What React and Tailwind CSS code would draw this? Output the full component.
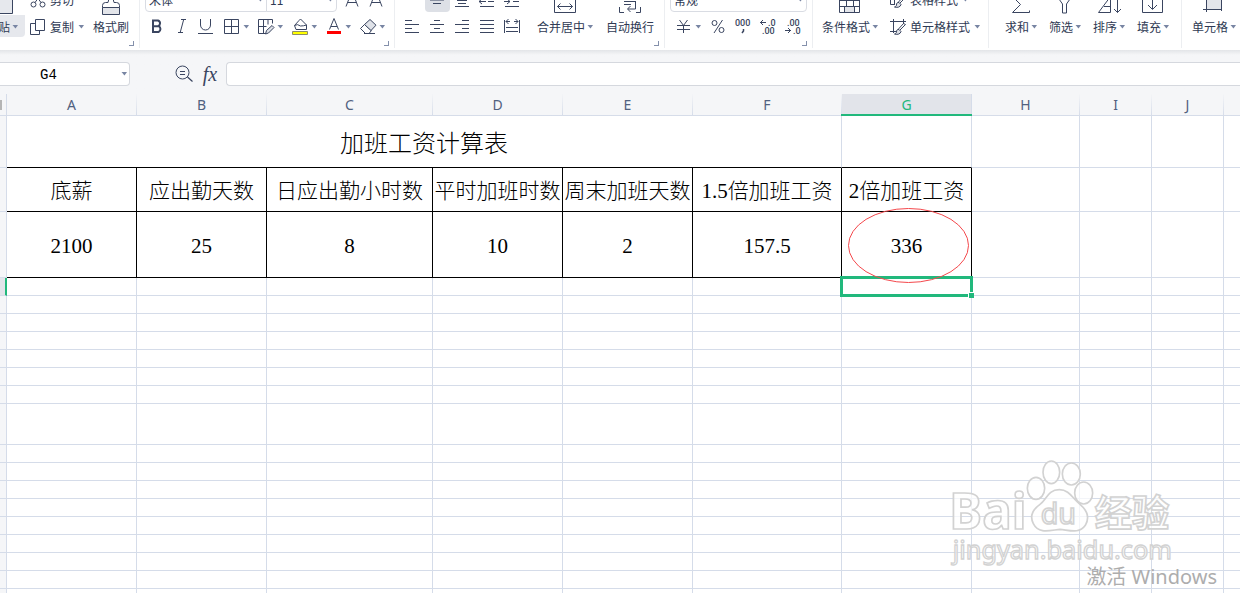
import { useState } from "react";

const COLUMNS = [
    { name: "A", width: "w-[130px]" },
    { name: "B", width: "w-[130px]" },
    { name: "C", width: "w-[166px]" },
    { name: "D", width: "w-[130px]" },
    { name: "E", width: "w-[130px]" },
    { name: "F", width: "w-[149px]" },
    { name: "G", width: "w-[130px]" },
    { name: "H", width: "w-[108px]" },
    { name: "I", width: "w-[72px]" },
    { name: "J", width: "w-[72px]" },
    { name: "", width: "" },
];

const HEADINGS = ["底薪", "应出勤天数", "日应出勤小时数", "平时加班时数", "周末加班天数", "1.5倍加班工资", "2倍加班工资"];
const VALUES = ["2100", "25", "8", "10", "2", "157.5", "336"];

// rows under the selected one, the seventh is taller
const EMPTY_ROWS = [18, 18, 18, 18, 18, 18, 41, 18, 18, 18, 18, 18, 18, 18, 18, 18];

function Arrow() {
    return (
        <svg width="6" height="4" viewBox="0 0 6 4" className="shrink-0">
            <path d="M.5 0h5.500L3.500 3.500z" fill="#7885a3" />
        </svg>
    );
}

function Icon({ size = 16, children }) {
    return (
        <svg
            width={size}
            height={size}
            viewBox={`0 0 ${size} ${size}`}
            fill="none"
            stroke="#3a4560"
            className="shrink-0 overflow-visible"
        >
            {children}
        </svg>
    );
}

function Group({ className = "", launcher, children }) {
    return (
        <div className={`relative flex h-[48px] shrink-0 items-end border-[#eceef1] pb-[11px] ${className}`}>
            {children}
            {launcher && (
                <button aria-label="更多设置" className="absolute right-[5px] bottom-[2px] size-[5px] border-r border-b border-[#8490ab]" />
            )}
        </div>
    );
}

function Rows({ children }) {
    return <div className="flex flex-col gap-[5px]">{children}</div>;
}

function Big({ label, arrow, className = "", children }) {
    return (
        <button className={`flex shrink-0 flex-col items-center gap-[3px] pb-px ${className}`}>
            <Icon size={24}>{children}</Icon>
            <span className="flex h-[18px] items-center gap-0.5 whitespace-nowrap">
                {label}
                {arrow && <Arrow />}
            </span>
        </button>
    );
}

function Small({ label, arrow, top, children }) {
    return (
        <button className={`flex items-center gap-1 whitespace-nowrap ${top ? "h-6" : "h-5"}`}>
            <Icon>{children}</Icon>
            {label}
            {arrow && <Arrow />}
        </button>
    );
}

function Tool({ label, children }) {
    return (
        <button aria-label={label} className="flex h-5 w-[34px] items-center gap-[3px] pl-0.5">
            <Icon>{children}</Icon>
            <Arrow />
        </button>
    );
}

function AlignTool({ label, active, top, children }) {
    return (
        <button
            aria-label={label}
            className={`flex w-[25px] items-center rounded-sm pl-1 ${top ? "h-6" : "h-5"} ${active ? "bg-[#dde0e6]" : ""}`}
        >
            <Icon>{children}</Icon>
        </button>
    );
}

function NumberTool({ label, children }) {
    return (
        <button aria-label={label} className="flex h-5 w-[25px] items-center pl-[5px]">
            <Icon>{children}</Icon>
        </button>
    );
}

function Digits({ x, y, children }) {
    return (
        <text x={x} y={y} className="fill-[#3a4560] stroke-none font-['Roboto'] text-[9px] font-medium">
            {children}
        </text>
    );
}

function Picker({ label, value, className }) {
    return (
        <label className={`relative flex h-6 items-center border border-[#d9dce3] bg-white ${className}`}>
            <select aria-label={label} className="h-full w-full appearance-none bg-transparent pl-[3px] outline-none">
                <option>{value}</option>
            </select>
            <span className="pointer-events-none absolute right-[3px]">
                <Arrow />
            </span>
        </label>
    );
}

function Brush() {
    return (
        <>
            <path d="M15.500 5.500L9.500 11.500M15.500 5.500l-2-1-5 5.500" />
            <path d="M9 10.500c-2-.5-2.500 1-2.500 2.500 0 1-1 2-2 2 3 1 6 0 6.500-2.500z" fill="#dfe2e8" />
        </>
    );
}

function Ribbon() {
    return (
        <div className="flex h-[50px] shrink-0 items-end overflow-hidden bg-white pb-0.5 text-xs text-[#2f3a54]">
            <Group className="w-[140px] border-r" launcher>
                <div className="flex w-[25px] shrink-0 justify-end overflow-hidden rounded-r-sm bg-linear-to-t from-[#e6e8ed] from-[22px] to-white to-[22px] pr-[7px]">
                    <Big label="粘贴" arrow>
                        <path d="M1.500 3.500h17v5M9.500 8.500h13v14h-13z" fill="#e6e8ed" />
                    </Big>
                </div>
                <div className="ml-[5px]">
                    <Rows>
                        <Small label="剪切" top>
                            <circle cx="3.500" cy="12.500" r="2.500" />
                            <circle cx="12.500" cy="12.500" r="2.500" />
                            <path d="M5 10.500L12 1M11 10.500L4 1" />
                        </Small>
                        <Small label="复制" arrow>
                            <path d="M5.500 .5h9v11h-9zM5.500 4.500h-5v11h9v-4" />
                        </Small>
                    </Rows>
                </div>
                <Big label="格式刷" className="ml-[9px]">
                    <path d="M3.500 16.500h17v7h-17z" fill="#e3e5ea" />
                    <path d="M3.500 16.500v-2q0-3 3-3h2.500l1-4h4l1 4h2.500q3 0 3 3v2" />
                </Big>
            </Group>

            <Group className="w-[255px] border-r pl-[5px]" launcher>
                <Rows>
                    <div className="flex">
                        <Picker label="字体" value="宋体" className="w-[122px] rounded-l-sm" />
                        <Picker label="字号" value="11" className="-ml-px w-[71px] rounded-r-sm" />
                        <button aria-label="增大字号" className="ml-[3px] flex h-6 w-6 items-center justify-center">
                            <Icon>
                                <path d="M2 14.500L8 -1l6 15.500M4 10.500h8" />
                            </Icon>
                        </button>
                        <button aria-label="减小字号" className="flex h-6 w-6 items-center justify-center">
                            <Icon>
                                <path d="M2 14.500L8 -1l6 15.500M4 10.500h8" />
                            </Icon>
                        </button>
                    </div>
                    <div className="flex">
                        <button aria-label="加粗" className="flex h-5 w-6 items-center justify-center">
                            <Icon>
                                <path d="M4 1.500h5a3 3 0 0 1 0 5.700H4zM4 7.200h5.600a3.200 3.200 0 0 1 0 5.800H4z" strokeWidth="2" />
                            </Icon>
                        </button>
                        <button aria-label="倾斜" className="flex h-5 w-6 items-center justify-center">
                            <Icon>
                                <path d="M8 .5h5M5 13.500h5M10.700 .5l-3.500 13" />
                            </Icon>
                        </button>
                        <button aria-label="下划线" className="mr-[5px] flex h-5 w-6 items-center justify-center">
                            <Icon>
                                <path d="M3.500 0v6a5 5 0 0 0 10 0V0M1 14.500h15" />
                            </Icon>
                        </button>
                        <Tool label="边框">
                            <path d="M.5 .5h14v14H.5zM7.500 .5v14M.5 7.500h14" />
                        </Tool>
                        <Tool label="绘制边框">
                            <path d="M8 14.500H.5V.5h14v4M5.500 .5v14M.5 7.500h8M10 .5v5" />
                            <path d="M7.500 15l1-3.500 5.500-5 2 2-5.500 5.500z" fill="#dfe2e8" />
                        </Tool>
                        <Tool label="填充颜色">
                            <path d="M2.500 6.500L7 1.500l1.500-1.500L14.500 6v4.500H4zM2.500 6.500q3-2 6 .5 3 0 6-1" />
                            <path d="M.5 12.500h15v3h-15z" fill="#ffff00" stroke="#8c8c6a" />
                        </Tool>
                        <Tool label="字体颜色">
                            <path d="M3.500 10.500L8 -.5l4.500 11M5 7.500h6" />
                            <path d="M1 13.500h14" stroke="#ff0000" strokeWidth="3" />
                        </Tool>
                        <Tool label="清除">
                            <path d="M4.500 5.500L.5 9.500l5 5h3.500l2.500-3z" />
                            <path d="M4.500 5.500L10 .5l6 5.700-5 5.300z" fill="#dfe2e8" />
                            <path d="M4 14.500h11" />
                        </Tool>
                    </div>
                </Rows>
            </Group>

            <Group className="w-[270px] border-r pl-[5px]" launcher>
                <Rows>
                    <div className="flex">
                        <AlignTool label="顶端对齐" top>
                            <path d="M1 .5h14M4 3.500h8" />
                        </AlignTool>
                        <AlignTool label="垂直居中" top active>
                            <path d="M4 4.500h8M1 8h14M4 11.500h8" />
                        </AlignTool>
                        <AlignTool label="底端对齐" top>
                            <path d="M3 8.500h10M4 11.500h8M1 14.500h14" />
                        </AlignTool>
                        <AlignTool label="减少缩进" top>
                            <path d="M9 5.500h6M1 14.500h14M0 9.500h7M3 7l-3 2.500L3 12M9 9.500h6" />
                        </AlignTool>
                        <AlignTool label="增加缩进" top>
                            <path d="M9 5.500h6M1 14.500h14M0 9.500h6M3 7l3 2.500L3 12M9 9.500h6" />
                        </AlignTool>
                    </div>
                    <div className="flex">
                        <AlignTool label="左对齐">
                            <path d="M1 1.500h7M1 5.500h14M1 9.500h7M1 13.500h14" />
                        </AlignTool>
                        <AlignTool label="居中">
                            <path d="M5 1.500h6M1 5.500h14M5 9.500h6M1 13.500h14" />
                        </AlignTool>
                        <AlignTool label="右对齐">
                            <path d="M8 1.500h7M1 5.500h14M8 9.500h7M1 13.500h14" />
                        </AlignTool>
                        <AlignTool label="两端对齐">
                            <path d="M1 1.500h14M1 5.500h14M1 9.500h14M1 13.500h14" />
                        </AlignTool>
                        <AlignTool label="分散对齐">
                            <path d="M.5 1v13M15.500 1v13M2 8.500h12M2 12.500h12M2 2.500h4M10 2.500h4M4.500 0L2 2.500 4.500 5M11.500 0L14 2.500 11.500 5" />
                        </AlignTool>
                    </div>
                </Rows>
                <Big label="合并居中" arrow className="ml-3">
                    <path d="M1.500 6.500h21v15h-21zM4.500 15.500h15M7.500 12.500l-3 3 3 3M16.500 12.500l3 3-3 3" />
                </Big>
                <Big label="自动换行" className="ml-[13px]">
                    <path d="M1.500 16v5.500H6M22.500 16v5.500H18M6 10.500h12M6 13.500h7M17.500 10.500v7.500H10M12.500 15l-3 3 3 3" />
                </Big>
            </Group>

            <Group className="w-[148px] border-r pl-[5px]" launcher>
                <Rows>
                    <Picker label="数字格式" value="常规" className="w-[137px] rounded-sm" />
                    <div className="flex">
                        <button aria-label="货币" className="flex h-5 w-[35px] items-center gap-[3px] pl-1.5">
                            <Icon>
                                <path d="M3.500 1l4 5.500 4-5.500M7.500 6.500V14M1 6.500h13M1 10.500h13" />
                            </Icon>
                            <Arrow />
                        </button>
                        <NumberTool label="百分比">
                            <path d="M12.500 1L4 14" />
                            <circle cx="4.500" cy="4" r="2.500" />
                            <circle cx="11.500" cy="11" r="2.500" />
                        </NumberTool>
                        <NumberTool label="千位分隔">
                            <Digits x={0} y={7}>000</Digits>
                            <path d="M8.500 10v2l-1.500 2" strokeWidth="1.500" />
                        </NumberTool>
                        <NumberTool label="增加小数位">
                            <path d="M0 3.500h6M3 1L.5 3.500 3 6" />
                            <Digits x={8} y={7}>.0</Digits>
                            <Digits x={2} y={15}>.00</Digits>
                        </NumberTool>
                        <NumberTool label="减少小数位">
                            <Digits x={2} y={7}>.00</Digits>
                            <path d="M0 11.500h6M3 9l2.500 2.500L3 14" />
                            <Digits x={8} y={15}>.0</Digits>
                        </NumberTool>
                    </div>
                </Rows>
            </Group>

            <Group className="w-[176px] border-r pl-[9px]">
                <Big label="条件格式" arrow>
                    <path d="M6.500 15.500h10v6h-10z" fill="#e3e5ea" />
                    <path d="M1.500 3.500h20v18h-20zM1.500 9.500h20M1.500 15.500h20M8.500 9.500v6M15.500 9.500v6M6.500 15.500v6M16.500 15.500v6" />
                </Big>
                <div className="ml-3">
                    <Rows>
                        <Small label="表格样式" arrow top>
                            <path d="M5 12.500H.5v-10h13v3M.5 7.500h9M4.500 2.500v10" />
                            <Brush />
                        </Small>
                        <Small label="单元格样式" arrow>
                            <path d="M3.500 0v14M0 2.500h16M13.500 0v5M0 12.500h6" />
                            <Brush />
                        </Small>
                    </Rows>
                </div>
            </Group>

            <Group className="w-[193px] gap-3 border-r pl-4">
                <Big label="求和" arrow>
                    <path d="M19.500 5.500h-16l8 8-8 8h17v-2" />
                </Big>
                <Big label="筛选" arrow>
                    <path d="M3.500 4.500h16l-6 8.500v9h-4v-9z" />
                </Big>
                <Big label="排序" arrow>
                    <path d="M13.500 5.500L1.500 21.500h12zM7 15.500h6.500M20.500 4.500v17M17 18l3.500 3.500L24 18" />
                </Big>
                <Big label="填充" arrow>
                    <path d="M1.500 3.500h20v18h-20zM11.500 6v12M7 14l4.500 4.500L16 14" />
                </Big>
            </Group>

            <Group className="pl-2.5">
                <Big label="单元格" arrow>
                    <path d="M4.500 4.500h15v14h-15z" fill="#e3e5ea" />
                    <path d="M4.500 2v19M19.500 2v14M1 18.500h16M19.500 18v2" />
                </Big>
            </Group>
        </div>
    );
}

function FormulaBar() {
    const [cell, setCell] = useState("G4");
    const [formula, setFormula] = useState("");

    return (
        <div className="flex h-11 shrink-0 items-center bg-linear-to-b from-[#e3e5e8] to-[#f5f6f8] to-[5px] pt-1">
            <div className="flex h-6 w-[130px] shrink-0 items-center rounded-r-sm border border-l-0 border-[#d5d8de] bg-white">
                <input
                    aria-label="名称框"
                    value={cell}
                    onChange={(e) => setCell(e.target.value)}
                    className="w-full min-w-0 bg-transparent pt-0.5 pr-6 text-center font-['Liberation_Mono',monospace] text-sm text-black outline-none"
                />
                <button aria-label="选择名称" className="pr-0.5">
                    <Arrow />
                </button>
            </div>
            <button aria-label="浏览公式" className="ml-[45px]">
                <Icon size={18}>
                    <circle cx="7.500" cy="7.500" r="6.500" />
                    <path d="M12.500 12l5 4.500M5 6.500h5M5 9.500h5" strokeWidth="1.200" />
                </Icon>
            </button>
            <button aria-label="插入函数" className="ml-2 w-[18px] font-['Liberation_Serif',serif] text-xl leading-none text-[#3a4560] italic">
                fx
            </button>
            <input
                aria-label="编辑栏"
                value={formula}
                onChange={(e) => setFormula(e.target.value)}
                className="ml-[7px] h-6 min-w-0 flex-1 rounded-l-sm border border-r-0 border-[#d5d8de] bg-white px-2 text-sm outline-none"
            />
        </div>
    );
}

function RowHead({ selected }) {
    return (
        <th
            aria-hidden="true"
            className={
                selected
                    ? "border-r-2 border-b border-r-[#21b87c] border-b-[#d5dce9] bg-[#e2e4ea]"
                    : "border-r border-b border-[#d5dce9] bg-[#f5f6f8]"
            }
        />
    );
}

function Blank({ from = 0 }) {
    return COLUMNS.slice(from).map((col) => (
        <td key={col.name} className="border-r border-b border-[#d5dce9] last:border-r-0" />
    ));
}

function Sheet() {
    return (
        <table className="w-full table-fixed border-separate border-spacing-0 font-['Liberation_Serif','Noto_Sans_CJK_SC',serif] text-[21px] leading-none font-light text-black">
            <colgroup>
                <col className="w-[7px]" />
                {COLUMNS.map((col) => (
                    <col key={col.name} className={col.width} />
                ))}
            </colgroup>
            <thead>
                <tr className="h-[22px] bg-[#f5f6f8] font-['Noto_Sans',sans-serif] text-sm leading-none text-[#51617f]">
                    <th className="border-r border-b border-[#d5dce9] p-0">
                        <div className="h-2.5 w-0.5 bg-[#b5b5b5]" />
                    </th>
                    {COLUMNS.map((col) => (
                        <th
                            key={col.name}
                            className={`relative border-r border-b border-[#d5dce9] p-0 font-normal last:border-r-0 ${
                                col.name === "G"
                                    ? "bg-[#e2e4ea] text-[#21b87c]"
                                    : "[border-image:linear-gradient(to_bottom,#f5f6f8,#d5dce9)_1]"
                            }`}
                        >
                            {col.name}
                            {col.name === "G" && <span className="absolute -right-px -bottom-px -left-px h-0.5 bg-[#21b87c]" />}
                        </th>
                    ))}
                </tr>
            </thead>
            <tbody>
                <tr className="h-[52px]">
                    <RowHead />
                    <td colSpan={6} className="border-r border-b border-r-[#d5dce9] border-b-black p-0 pt-1 text-center text-2xl leading-none">
                        加班工资计算表
                    </td>
                    <td className="border-r border-b border-r-[#d5dce9] border-b-black" />
                    <Blank from={7} />
                </tr>
                <tr className="h-11">
                    <RowHead />
                    {HEADINGS.map((text) => (
                        <td key={text} className="border-r border-b border-black p-0 pt-1 text-center whitespace-nowrap">
                            {text}
                        </td>
                    ))}
                    <Blank from={7} />
                </tr>
                <tr className="h-[66px]">
                    <RowHead />
                    {VALUES.map((text, i) => (
                        <td key={i} className="relative border-r border-b border-black p-0 pt-1 text-center">
                            {text}
                            {i === 6 && (
                                <svg width="122" height="76" viewBox="0 0 122 76" className="absolute -top-1 left-1.5 z-20">
                                    <ellipse cx="60.500" cy="37.500" rx="60" ry="37" fill="none" stroke="#f4484c" />
                                </svg>
                            )}
                        </td>
                    ))}
                    <Blank from={7} />
                </tr>
                <tr className="h-[18px]">
                    <RowHead selected />
                    {COLUMNS.map((col) => (
                        <td key={col.name} className="relative border-r border-b border-[#d5dce9] p-0 last:border-r-0">
                            {col.name === "G" && (
                                <div className="absolute -inset-0.5 z-10 border-3 border-[#21b87c]">
                                    <span className="absolute -right-1 -bottom-1 size-1.5 border-t border-l border-white bg-[#21b87c]" />
                                </div>
                            )}
                        </td>
                    ))}
                </tr>
                {EMPTY_ROWS.map((height, i) => (
                    <tr key={i} style={{ height }}>
                        <RowHead />
                        <Blank />
                    </tr>
                ))}
            </tbody>
        </table>
    );
}

function Watermark() {
    return (
        <div className="pointer-events-none absolute right-0 bottom-0 z-30">
            <svg width="300" height="143" viewBox="0 0 900 429" fill="#ffffff" fillOpacity="0.7" stroke="#d2d2d2" strokeWidth="5">
                <text x="28" y="238" className="font-['Noto_Sans',sans-serif] text-[148px] font-bold">
                    Bai
                </text>
                <ellipse cx="288" cy="115" rx="26" ry="33" />
                <ellipse cx="334" cy="67" rx="25" ry="34" />
                <ellipse cx="394" cy="72" rx="27" ry="33" />
                <ellipse cx="431" cy="129" rx="27" ry="33" />
                <path d="M358 119c-35 0-38 30-58 44-24 17-30 38-20 58 16 32 50 20 80 17 30 3 58 14 76-12 14-24 4-46-16-63-22-17-32-44-62-44z" />
                <text x="302" y="222" className="font-['Noto_Sans',sans-serif] text-[86px]">
                    du
                </text>
                <text x="464" y="231" className="font-['Noto_Sans_CJK_SC',sans-serif] text-[112px] font-bold">
                    经验
                </text>
                <text x="38" y="326" strokeWidth="4" className="font-['Noto_Sans',sans-serif] text-[76px]">
                    jingyan.baidu.com
                </text>
            </svg>
            <p className="absolute right-[23px] bottom-1 font-['Noto_Sans','Noto_Sans_CJK_SC',sans-serif] text-xl leading-6 whitespace-nowrap text-[#adadad]">
                激活 Windows
            </p>
        </div>
    );
}

export default function App() {
    return (
        <main className="relative flex h-screen flex-col overflow-hidden bg-white font-['Noto_Sans_CJK_SC',sans-serif]">
            <Ribbon />
            <FormulaBar />
            <Sheet />
            <Watermark />
        </main>
    );
}
